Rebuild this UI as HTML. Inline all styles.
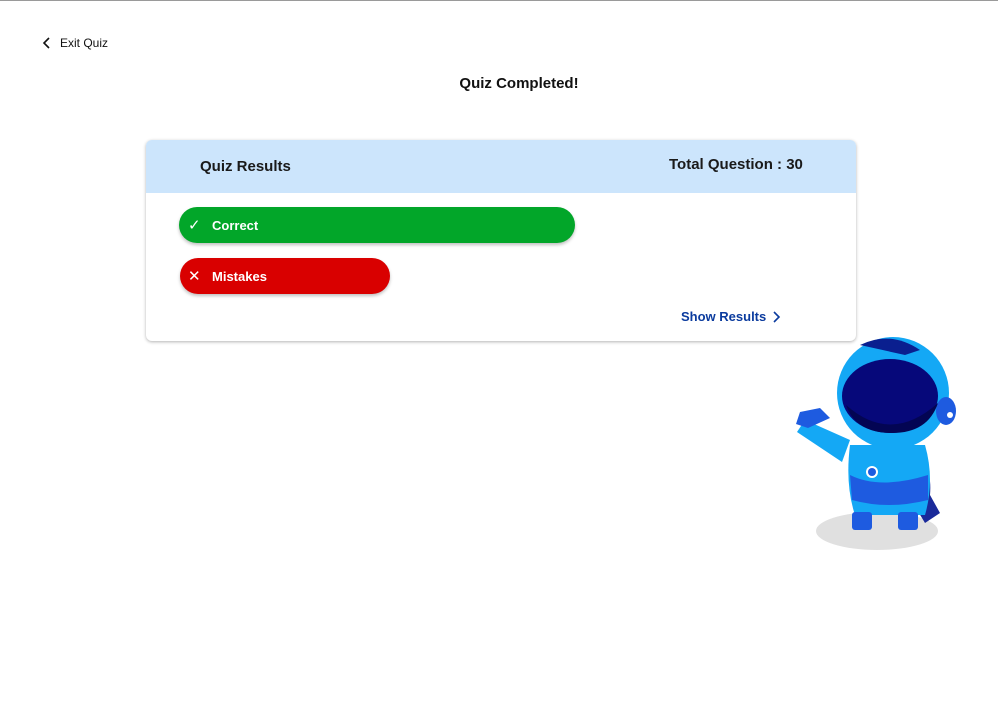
<!DOCTYPE html>
<html><head><meta charset="utf-8"><style>
body{margin:0;width:998px;height:711px;background:#fff;font-family:"Liberation Sans",sans-serif;position:relative;overflow:hidden}
.abs{position:absolute}
.card{left:146px;top:140px;width:710px;height:201px;border-radius:6px;background:#fff;box-shadow:0 1px 3px rgba(0,0,0,.3);overflow:hidden}
.hdr{left:0;top:0;width:710px;height:53px;background:#cce5fc}
.pill{height:36px;border-radius:18px;color:#fff;font-weight:bold;font-size:13px;box-shadow:0 2px 3px rgba(0,0,0,.25);display:flex;align-items:center}
</style></head><body>
<div class="abs" style="left:0;top:0;width:998px;height:1px;background:#9a9a9a"></div>
<svg class="abs" style="left:42px;top:37px" width="10" height="12" viewBox="0 0 10 12"><path d="M7 1L2 6l5 5" fill="none" stroke="#111" stroke-width="1.6"/></svg>
<div class="abs" style="left:60px;top:36px;font-size:12px;color:#111">Exit Quiz</div>
<div class="abs" style="left:0;width:1038px;top:75px;text-align:center;font-size:15px;font-weight:bold;color:#111">Quiz Completed!</div>
<div class="abs card">
 <div class="abs hdr"></div>
 <div class="abs" style="left:54px;top:18px;font-size:15px;font-weight:bold;color:#1a1a1a">Quiz Results</div>
 <div class="abs" style="left:523px;top:16px;font-size:15px;font-weight:bold;color:#1a1a1a">Total Question : 30</div>
 <div class="abs pill" style="left:33px;top:67px;width:396px;background:#02a629"><span style="margin-left:9px;width:24px;font-size:15px;font-weight:normal">✓</span>Correct</div>
 <div class="abs pill" style="left:34px;top:118px;width:210px;background:#d90000"><span style="margin-left:8px;width:24px;font-size:15px;font-weight:normal">✕</span>Mistakes</div>
 <div class="abs" style="left:535px;top:169px;font-size:13px;font-weight:bold;color:#0b3b9e">Show Results</div>
 <svg class="abs" style="left:625px;top:170px" width="10" height="14" viewBox="0 0 10 14"><path d="M3 2l5 5-5 5" fill="none" stroke="#0b3b9e" stroke-width="1.6"/></svg>
</div>
<svg class="abs" style="left:780px;top:335px" width="200" height="230" viewBox="780 335 200 230">
 <ellipse cx="877" cy="531" rx="61" ry="19" fill="#e0e0e0"/>
 <path d="M908 450q25 10 22 45l10 18-15 10-12-20z" fill="#1a2a9a"/>
 <path d="M850 445q-5 40 5 70h70q10-35 0-70z" fill="#14a8f5"/>
 <path d="M850 475q30 15 78 0v25q-40 10-76 0z" fill="#1e5be0"/>
 <path d="M850 440l-45-20-8 12 45 30z" fill="#14a8f5"/>
 <path d="M800 412l20-4 10 10-22 10-12-4z" fill="#1e5be0"/>
 <rect x="852" y="512" width="20" height="18" rx="3" fill="#1e5be0"/>
 <rect x="898" y="512" width="20" height="18" rx="3" fill="#1e5be0"/>
 <circle cx="872" cy="472" r="6" fill="#fff"/><circle cx="872" cy="472" r="4" fill="#1e5be0"/>
 <circle cx="893" cy="393" r="56" fill="#14a8f5"/>
 <path d="M860 345q30-15 60 5l-15 5z" fill="#0a1f8f"/>
 <ellipse cx="946" cy="411" rx="10" ry="14" fill="#1e5be0"/>
 <circle cx="950" cy="415" r="3" fill="#fff"/>
 <ellipse cx="890" cy="396" rx="48" ry="37" fill="#06087a"/>
 <path d="M846 405q45 40 92-2q-10 30-46 30q-36 0-46-28z" fill="#030553"/>
</svg>
</body></html>
